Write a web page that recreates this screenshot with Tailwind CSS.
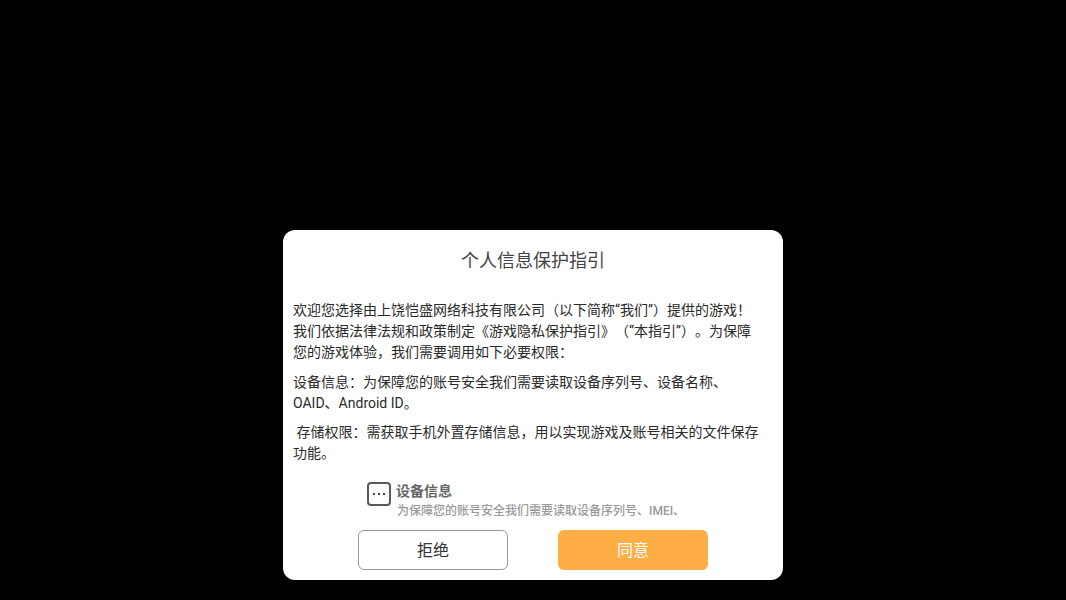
<!DOCTYPE html>
<html lang="zh-CN">
<head>
    <meta charset="UTF-8">
    <title>个人信息保护指引</title>
    <script src="https://cdn.jsdelivr.net/npm/@tailwindcss/browser@4"></script>
</head>
<body class="bg-black">
    <div class="w-[1066px] h-[600px] bg-black flex flex-col items-center overflow-hidden font-['Roboto','Noto_Sans_CJK_SC',sans-serif]">
        <!-- 弹窗 -->
        <div class="mt-[230px] w-[500px] h-[350px] bg-white rounded-[12px] flex flex-col">
            <h1 class="mt-[19px] h-[24px] text-center text-[18px] leading-[24px] font-normal text-[#444444]">个人信息保护指引</h1>

            <div class="mt-[27px] ml-[10px] w-[480px] text-[14px] leading-[21px] text-[#2a2a2a] [text-spacing-trim:space-all]">
                <p>欢迎您选择由上饶恺盛网络科技有限公司（以下简称“我们”）提供的游戏！<br>我们依据法律法规和政策制定《游戏隐私保护指引》（“本指引”）。为保障<br>您的游戏体验，我们需要调用如下必要权限：</p>
                <p class="mt-[9px]">设备信息：为保障您的账号安全我们需要读取设备序列号、设备名称、<br>OAID、Android ID。</p>
                <p class="mt-[8px]">&nbsp;存储权限：需获取手机外置存储信息，用以实现游戏及账号相关的文件保存<br>功能。</p>
            </div>

            <!-- 权限说明 -->
            <div class="mt-[17px] ml-[84px] flex gap-[5px]">
                <div class="mt-[1px] w-[24px] h-[24px] shrink-0 border-2 border-[#5a5a5a] rounded-[4px] flex items-center justify-center gap-[3px]">
                    <span class="w-[2px] h-[2px] bg-[#444444]"></span>
                    <span class="w-[2px] h-[2px] bg-[#444444]"></span>
                    <span class="w-[2px] h-[2px] bg-[#444444]"></span>
                </div>
                <div>
                    <div class="text-[14px] leading-[20px] font-semibold text-[#666666]">设备信息</div>
                    <div class="mt-[1px] ml-[1px] text-[12px] leading-[18px] font-medium text-[#999999]">为保障您的账号安全我们需要读取设备序列号、IMEI、</div>
                </div>
            </div>

            <!-- 按钮 -->
            <div class="mt-[10px] ml-[75px] flex gap-[50px]">
                <button class="w-[150px] h-[40px] pt-[2px] bg-white border border-[#999999] rounded-[6px] text-[16px] text-[#333333]">拒绝</button>
                <button class="w-[150px] h-[40px] pt-[2px] bg-[#ffad45] rounded-[6px] text-[16px] text-white">同意</button>
            </div>
        </div>
    </div>
</body>
</html>
